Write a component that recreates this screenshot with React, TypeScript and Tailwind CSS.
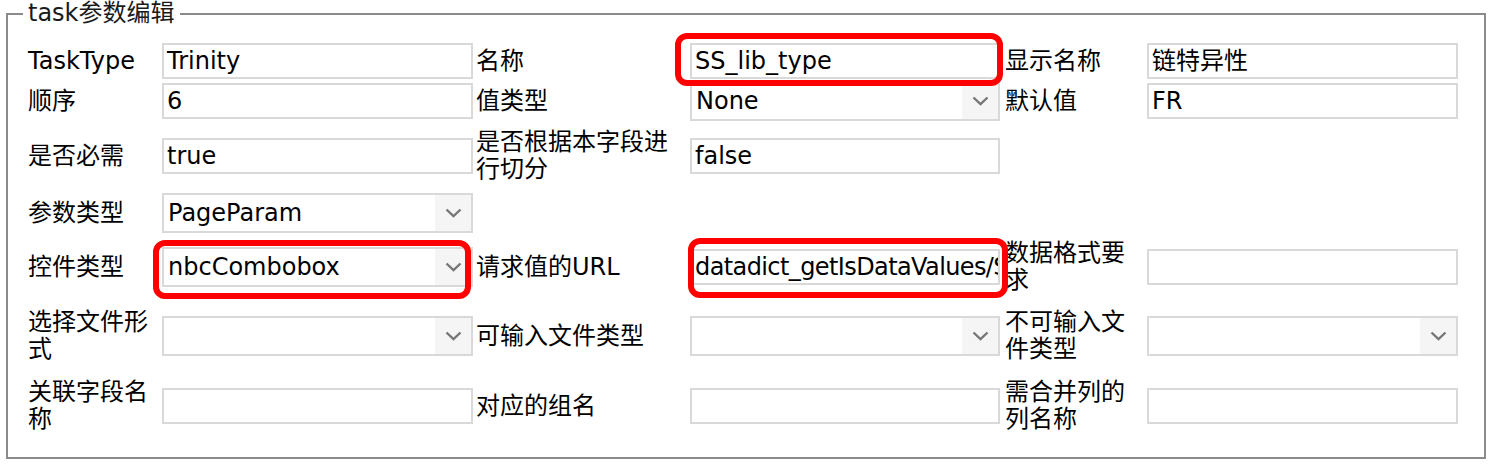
// Task parameter edit form: a legacy fieldset with a 3-column label/input grid.

type Cell =
  | { kind: "label"; text: string }
  | { kind: "input"; value?: string; tight?: boolean }
  | { kind: "select"; value?: string }
  | null;

// Each row holds 6 cells: label, field, label, field, label, field
const rows: Cell[][] = [
  [
    { kind: "label", text: "TaskType" },
    { kind: "input", value: "Trinity" },
    { kind: "label", text: "名称" },
    { kind: "input", value: "SS_lib_type" },
    { kind: "label", text: "显示名称" },
    { kind: "input", value: "链特异性" },
  ],
  [
    { kind: "label", text: "顺序" },
    { kind: "input", value: "6" },
    { kind: "label", text: "值类型" },
    { kind: "select", value: "None" },
    { kind: "label", text: "默认值" },
    { kind: "input", value: "FR" },
  ],
  [
    { kind: "label", text: "是否必需" },
    { kind: "input", value: "true" },
    { kind: "label", text: "是否根据本字段进行切分" },
    { kind: "input", value: "false" },
    null,
    null,
  ],
  [
    { kind: "label", text: "参数类型" },
    { kind: "select", value: "PageParam" },
    null,
    null,
    null,
    null,
  ],
  [
    { kind: "label", text: "控件类型" },
    { kind: "select", value: "nbcCombobox" },
    { kind: "label", text: "请求值的URL" },
    { kind: "input", value: "datadict_getIsDataValues/SS_lib_type", tight: true },
    { kind: "label", text: "数据格式要求" },
    { kind: "input" },
  ],
  [
    { kind: "label", text: "选择文件形式" },
    { kind: "select" },
    { kind: "label", text: "可输入文件类型" },
    { kind: "select" },
    { kind: "label", text: "不可输入文件类型" },
    { kind: "select" },
  ],
  [
    { kind: "label", text: "关联字段名称" },
    { kind: "input" },
    { kind: "label", text: "对应的组名" },
    { kind: "input" },
    { kind: "label", text: "需合并列的列名称" },
    { kind: "input" },
  ],
];

function Chevron() {
  return (
    <svg width="17" height="10" viewBox="0 0 17 10" fill="none">
      <polyline
        points="1.5,1.5 8.5,8.2 15.5,1.5"
        stroke="#777777"
        strokeWidth="2.4"
      />
    </svg>
  );
}

function renderCell(cell: Cell, col: number) {
  // field columns are slightly different widths
  const fieldWidth = col === 3 ? "w-[310px]" : "w-[311px]";

  if (!cell) return <div />;

  if (cell.kind === "label") {
    return <div className="pr-[8px] leading-[27px] text-black">{cell.text}</div>;
  }

  if (cell.kind === "input") {
    return (
      <div
        className={`${fieldWidth} h-[36px] border-2 border-[#d9d9d9] bg-white px-[3px] flex items-center overflow-hidden whitespace-nowrap text-black ${
          cell.tight ? "tracking-[-0.6px]" : ""
        }`}
      >
        {cell.value}
      </div>
    );
  }

  return (
    <div
      className={`${fieldWidth} h-[40px] border-2 border-[#d9d9d9] bg-white flex items-stretch text-black`}
    >
      <div className="flex-1 px-[4px] flex items-center overflow-hidden whitespace-nowrap">
        {cell.value}
      </div>
      <div className="w-[36px] bg-[#f5f5f5] flex items-center justify-center">
        <Chevron />
      </div>
    </div>
  );
}

export default function App() {
  return (
    <div className="relative w-[1490px] h-[464px] bg-white font-['DejaVu_Sans','Noto_Sans_CJK_SC',sans-serif] text-[24px]">
      <fieldset className="ml-[6px] mr-[4px] h-[459px] border-2 border-[#8a8a8a] pl-[20px] pt-[14px]">
        <legend className="-ml-[5px] px-[5px] leading-[27px] text-[#1a1a1a]">
          task参数编辑
        </legend>

        {/* label / field grid */}
        <div className="grid grid-cols-[134px_314px_214px_315px_142px_311px] grid-rows-[40px_40px_70px_44px_64px_74px_66px] items-center">
          {rows.map((row, r) =>
            row.map((cell, c) => <div key={`${r}-${c}`}>{renderCell(cell, c)}</div>)
          )}
        </div>
      </fieldset>

      {/* red highlight marks drawn over the screenshot */}
      <div className="absolute left-[675px] top-[33px] w-[328px] h-[53px] border-[6px] border-[#ff0000] rounded-[12px]" />
      <div className="absolute left-[153px] top-[240px] w-[318px] h-[59px] border-[6px] border-[#ff0000] rounded-[12px]" />
      <div className="absolute left-[688px] top-[238px] w-[320px] h-[60px] border-[6px] border-[#ff0000] rounded-[12px]" />
    </div>
  );
}
